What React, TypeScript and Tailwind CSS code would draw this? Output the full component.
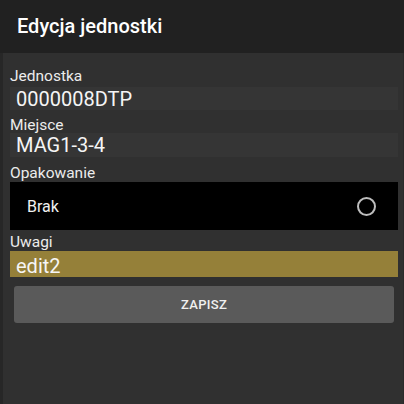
export default function App() {
  return (
    <div className="w-[404px] h-[404px] bg-[#303030] text-white overflow-hidden" style={{ fontFamily: 'Roboto, "Liberation Sans", sans-serif' }}>
      <div className="h-[53px] bg-[#212121] flex items-center pl-[17px]">
        <h1 className="text-[20px] font-medium leading-none pb-[1px]">Edycja jednostki</h1>
      </div>

      <div className="h-[351px] border-l-[3px] border-l-[#272727] border-r border-r-[#2a2a2a] pl-[7px] pr-[5px]">
        <div className="pt-[15px] pb-[3px] text-[15.5px] leading-[16px] text-[#ececec]">Jednostka</div>
        <div className="h-[23px] bg-[#353535] pl-[6px] text-[20px] leading-[25px] text-[#f5f5f5]">0000008DTP</div>

        <div className="pt-[7px] text-[15.5px] leading-[16px] text-[#ececec]">Miejsce</div>
        <div className="h-[24px] bg-[#353535] pl-[6px] text-[20px] leading-[25px] text-[#f5f5f5]">MAG1-3-4</div>

        <div className="pt-[8px] pb-[1px] text-[15.5px] leading-[16px] text-[#ececec]">Opakowanie</div>
        <div className="h-[48px] bg-black flex items-center justify-between pl-[17px] pr-[22px]">
          <span className="text-[16px] leading-none pt-[2px] text-[#f0f0f0]">Brak</span>
          <span className="w-[19px] h-[19px] rounded-full border-2 border-[#bdbdbd]" />
        </div>

        <div className="pt-[4px] pb-[1px] text-[15.5px] leading-[16px] text-[#ececec]">Uwagi</div>
        <div className="h-[26px] bg-[#958039] pl-[6px] text-[20px] leading-[30px] text-[#f5f5f5]">edit2</div>

        <div className="px-[4px] pt-[9px]">
          <button className="w-full h-[37px] rounded-[3px] bg-[#5a5a5a] text-[13px] font-medium text-[#f0f0f0] tracking-[0.3px]">
            ZAPISZ
          </button>
        </div>
      </div>
    </div>
  )
}
